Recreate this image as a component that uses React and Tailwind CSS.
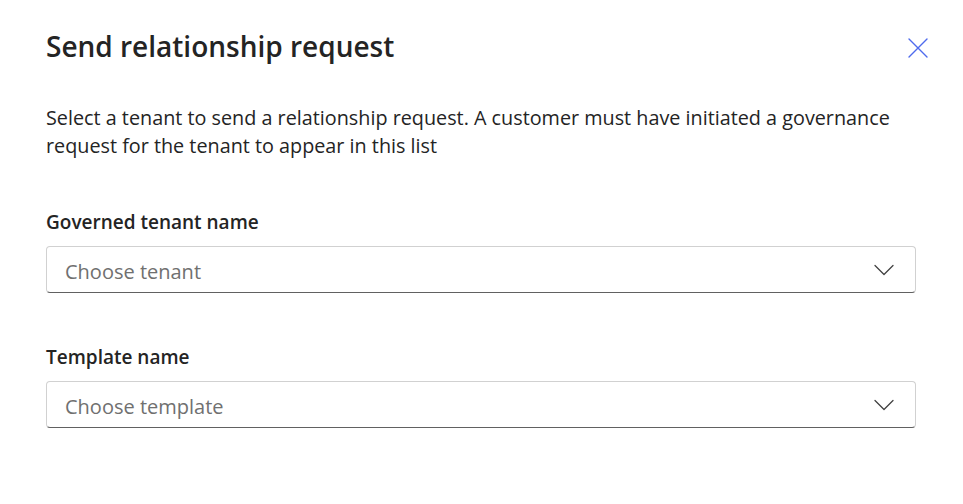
const Chevron = () => (
    <svg width="20" height="12" viewBox="0 0 20 12" fill="none" className="text-[#424242]">
        <path d="M1 1.5 L10 10.5 L19 1.5" stroke="currentColor" strokeWidth="1.3" strokeLinecap="round" strokeLinejoin="round" />
    </svg>
);

const Field = ({ label, placeholder }) => (
    <div className="flex flex-col">
        <label className="text-[19px] font-semibold text-[#242424] leading-[26px] mb-[11px]">
            {label}
        </label>
        <button
            type="button"
            className="h-[47px] w-full flex items-center justify-between pl-[18px] pr-[21px] rounded-[4px] border border-[#d1d1d1] border-b-[#616161] bg-white text-left"
        >
            <span className="text-[20px] text-[#707070] mt-[5px]">{placeholder}</span>
            <Chevron />
        </button>
    </div>
);

const App = () => {
    return (
        <div
            className="bg-white w-[963px] h-[504px] pl-[46px] pr-[47px] pt-[24px]"
            style={{ fontFamily: '"Open Sans", "Noto Sans", sans-serif' }}
        >
            {/* HEADER */}
            <div className="flex items-start justify-between">
                <h1 className="text-[28px] font-semibold text-[#242424] leading-[44px]">
                    Send relationship request
                </h1>
                <button type="button" className="mt-[14px] -mr-[12px] text-[#4f6bed]">
                    <svg width="20" height="20" viewBox="0 0 20 20" fill="none">
                        <path d="M1 1 L19 19 M19 1 L1 19" stroke="currentColor" strokeWidth="1.4" strokeLinecap="round" />
                    </svg>
                </button>
            </div>

            <p className="mt-[36px] text-[19.8px] leading-[28px] text-[#242424]">
                Select a tenant to send a relationship request. A customer must have initiated a governance request for the tenant to appear in this list
            </p>

            <div className="mt-[49px] flex flex-col gap-[51px]">
                <Field label="Governed tenant name" placeholder="Choose tenant" />
                <Field label="Template name" placeholder="Choose template" />
            </div>
        </div>
    );
};

export default App;
